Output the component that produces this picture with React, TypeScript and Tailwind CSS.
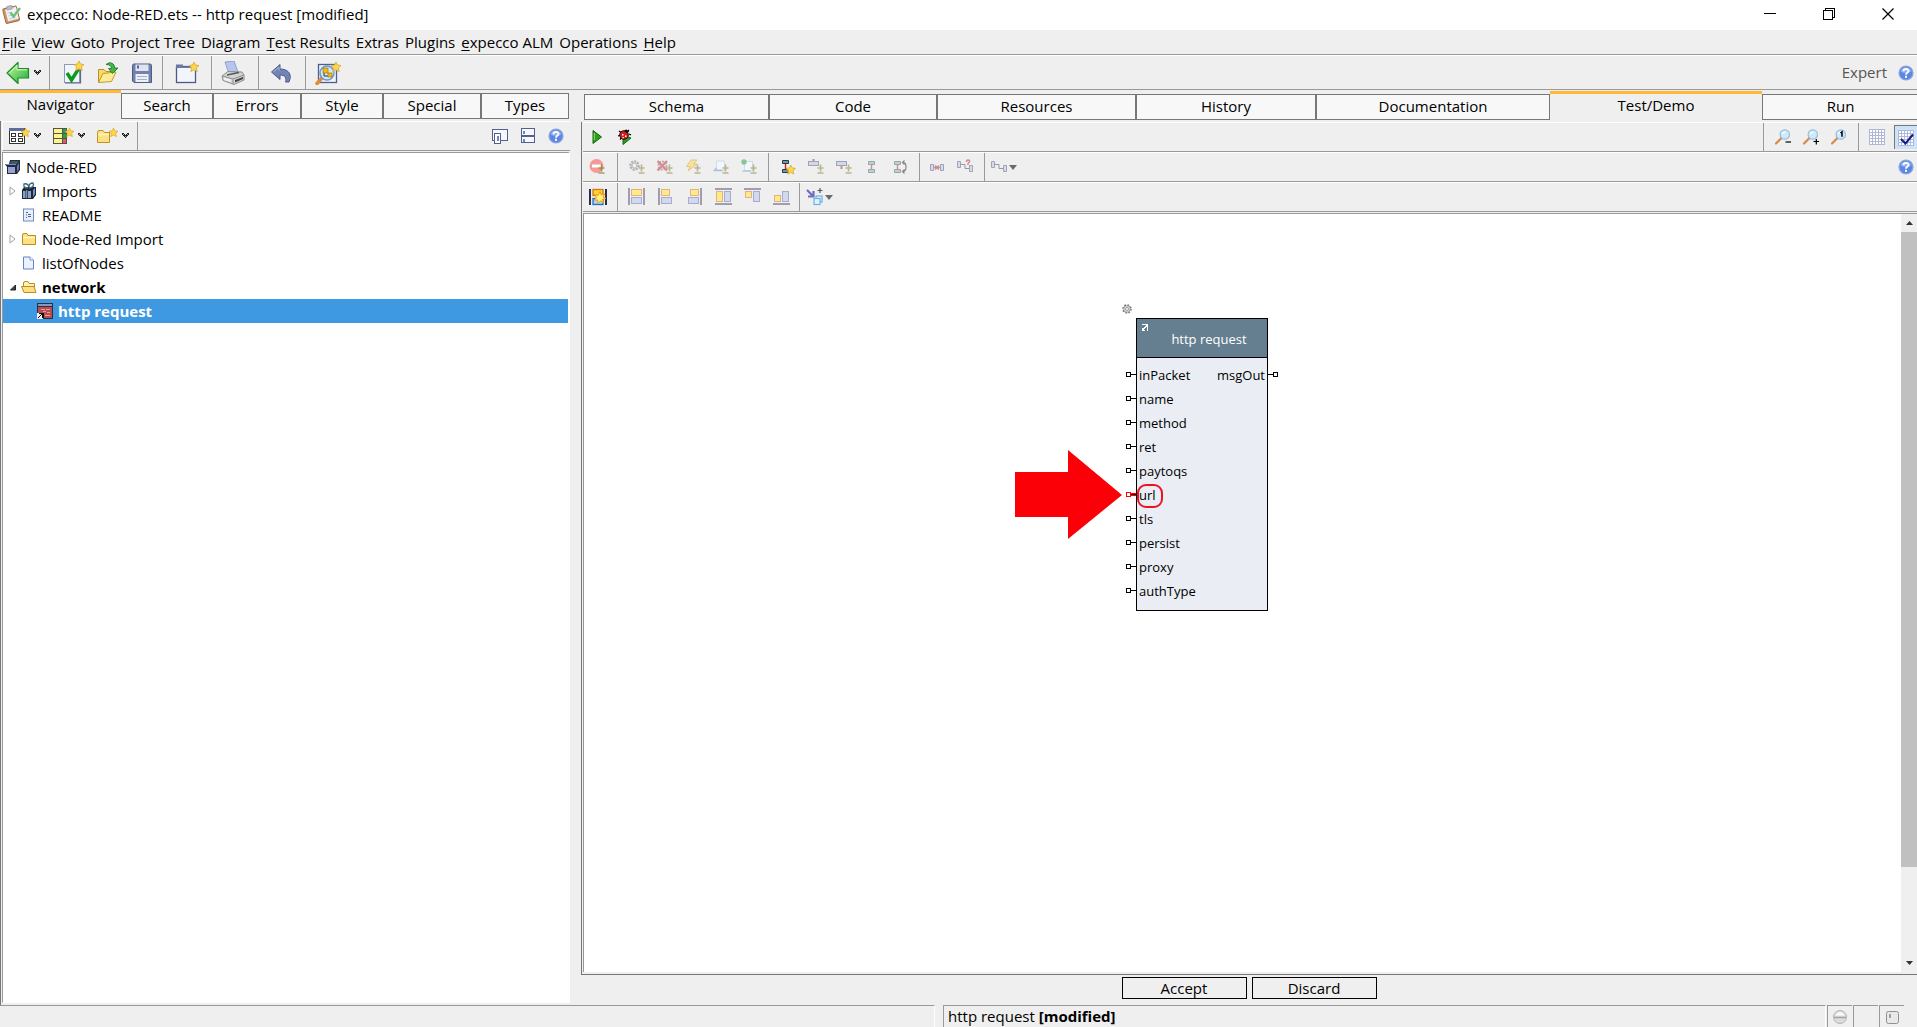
import type { ReactNode } from "react";
import clsx from "clsx";

const menus = [
  { key: "F", rest: "ile" },
  { key: "V", rest: "iew" },
  { key: "", rest: "Goto" },
  { key: "", rest: "Project Tree" },
  { key: "", rest: "Diagram" },
  { key: "T", rest: "est Results" },
  { key: "", rest: "Extras" },
  { key: "", rest: "Plugins" },
  { key: "e", rest: "xpecco ALM" },
  { key: "", rest: "Operations" },
  { key: "H", rest: "elp" },
];

const leftTabs = ["Navigator", "Search", "Errors", "Style", "Special", "Types"];
const rightTabs = ["Schema", "Code", "Resources", "History", "Documentation", "Test/Demo", "Run"];
const inputPins = ["inPacket", "name", "method", "ret", "paytoqs", "url", "tls", "persist", "proxy", "authType"];

/* ---------- icons ---------- */

function Ico({ w = 16, h = 16, crisp = false, faded = false, children }: { w?: number; h?: number; crisp?: boolean; faded?: boolean; children: ReactNode }) {
  return (
    <svg
      width={w}
      height={h}
      viewBox={`0 0 ${w} ${h}`}
      fill="none"
      shapeRendering={crisp ? "crispEdges" : "auto"}
      className={clsx("shrink-0", faded && "opacity-50")}
      aria-hidden="true"
    >
      {children}
    </svg>
  );
}

const Star = ({ x, y, s = 1 }: { x: number; y: number; s?: number }) => (
  <path
    transform={`translate(${x} ${y}) scale(${s})`}
    d="M5 0 L6.4 3 L10 3.6 L7.4 6 L8.2 9.6 L5 7.9 L1.8 9.6 L2.6 6 L0 3.6 L3.6 3 Z"
    fill="#fcd64c"
    stroke="#d9a021"
    strokeWidth="0.7"
  />
);

const Chevron = () => (
  <Ico w={7} h={6} crisp>
    <path d="M0 0h2v1h1v1h1v-1h1v-1h2v2h-1v1h-1v1h-1v1h-1v-1h-1v-1h-1v-1h-1z" fill="#222" />
    <path d="M1 1h1v1h-1zM5 1h1v1h-1zM3 3h1v1h-1z" fill="#aaa" />
  </Ico>
);

const DropTriangle = () => (
  <Ico w={8} h={5}>
    <path d="M0 0H8L4 5Z" fill="#6a6a6a" />
  </Ico>
);

const AppIcon = () => (
  <Ico w={20} h={20}>
    <g transform="rotate(-14 10 10)">
      <rect x="2" y="3" width="14" height="15" rx="1.5" fill="#d39a68" stroke="#9c6b46" />
      <rect x="4.500" y="4" width="11" height="12" fill="#eef2f8" />
      <rect x="6" y="1.500" width="6" height="3.500" rx="1" fill="#b9bcc6" stroke="#888" strokeWidth="0.600" />
      <path d="M6 8h3M6 11h5M6 14h7" stroke="#c2cbdb" />
    </g>
    <path d="M8.500 8.500L11.500 12.500L18 4" stroke="#74bd78" strokeWidth="2.400" />
  </Ico>
);

const BackIcon = () => (
  <Ico w={24} h={24}>
    <defs>
      <linearGradient id="back" x1="0" y1="0" x2="1" y2="1">
        <stop offset="0" stopColor="#c9f7a0" />
        <stop offset="1" stopColor="#1fae35" />
      </linearGradient>
    </defs>
    <path d="M1 12L12 1.500V7.500H22.500V17H12V22.500Z" fill="url(#back)" stroke="#1a8c2a" strokeWidth="1.200" strokeLinejoin="round" />
    <path d="M3.500 12L11 4.500V8.800H21" stroke="#e6fbd2" strokeWidth="0.900" />
  </Ico>
);

const NewTestIcon = () => (
  <Ico w={24} h={24}>
    <rect x="2.500" y="3.500" width="15" height="18" fill="#f3f5fb" stroke="#8d9abb" />
    <path d="M18.500 4v18H3" stroke="#5c6a8c" strokeWidth="1.200" />
    <path d="M5 12l4.500 7L16.500 8" stroke="#0a9b1d" strokeWidth="3.400" />
    <Star x={12} y={0} />
  </Ico>
);

const OpenIcon = () => (
  <Ico w={24} h={24}>
    <path d="M2.500 21V8.500H8L10 10.500H16V14" fill="#f7d968" stroke="#b98e24" />
    <path d="M2.500 21.500L7 12.500L20 11L15.500 20.500Z" fill="#fdeb95" stroke="#c49a2b" />
    <path d="M10 3.500C14 0 19 2.500 18.500 7H22L16.500 12.500L12.500 7.500H15.500C15.500 5 13.500 3.500 10 3.500Z" fill="#46b64c" stroke="#1f7d2a" strokeWidth="0.900" />
  </Ico>
);

const SaveIcon = () => (
  <Ico w={24} h={24}>
    <path d="M2.500 4.500Q2.500 3 4 3H20Q21.500 3 21.500 4.500V21.500H4L2.500 20Z" fill="#7381ac" stroke="#4d5b88" />
    <rect x="5.500" y="3.500" width="13" height="6.500" fill="#dfe4f2" />
    <rect x="7" y="4.500" width="2" height="3" fill="#59678f" />
    <rect x="5.500" y="13" width="13" height="8" fill="#eef0f7" />
    <path d="M7 15.500h10M7 18.500h10" stroke="#a6afc9" />
  </Ico>
);

const NewWindowIcon = () => (
  <Ico w={24} h={24}>
    <rect x="1.500" y="5.500" width="19" height="16" fill="#f3f5fc" stroke="#4c5a86" strokeWidth="1.300" />
    <path d="M1 3.500h7v2h13v1.500H1z" fill="#6b79a6" />
    <Star x={14} y={1} />
  </Ico>
);

const PrinterIcon = () => (
  <Ico w={24} h={24}>
    <path d="M4 1L13 0L17 11L8 13Z" fill="#b4c6ee" stroke="#8295c4" strokeWidth="0.800" />
    <path d="M1 15L7 10.500L21 11L23 14V19L13 23.500L2 19.500Z" fill="#d4d4d4" stroke="#8d8d8d" />
    <path d="M1.500 15L12 18L23 14" stroke="#8a8a8a" />
    <path d="M6 14L18 11.500" stroke="#555" strokeWidth="1.500" />
    <path d="M12 18.500V23" stroke="#8a8a8a" />
    <path d="M14 19L22 16V18L14 21.500Z" fill="#444" />
    <path d="M3 16.500l7 2v2.500l-7-2z" fill="#f0f0f0" />
  </Ico>
);

const UndoIcon = () => (
  <Ico w={24} h={24}>
    <path d="M1.500 11L10 3.500V8C17 8 23 12 19 21H15.500C17 17 15 14 10 14V18.500Z" fill="#7284b5" stroke="#4b5b8b" strokeLinejoin="round" />
    <path d="M3.500 11L9 6V9.300" stroke="#aeb9d8" />
  </Ico>
);

const SearchDiagramIcon = () => (
  <Ico w={26} h={24}>
    <rect x="3.500" y="3.500" width="18" height="18" fill="#eef2fb" stroke="#4c5f94" strokeWidth="1.300" />
    <path d="M2 22.500L7 17" stroke="#e08b36" strokeWidth="3.500" strokeLinecap="round" />
    <circle cx="12" cy="12" r="7" fill="#cfe6fb" stroke="#6f94c6" strokeWidth="1.400" />
    <path d="M9 10v5h5" stroke="#334" />
    <rect x="8" y="7" width="5" height="5" fill="#f2b90f" stroke="#93700c" strokeWidth="0.600" />
    <rect x="13" y="12" width="4" height="4" fill="#f2b90f" stroke="#93700c" strokeWidth="0.600" />
    <Star x={16} y={1} />
  </Ico>
);

const HelpIcon = () => (
  <Ico>
    <circle cx="8" cy="8" r="7" fill="#5b86e5" stroke="#8ca6e0" strokeWidth="1.200" />
    <path d="M2.500 6.500a5.800 5.800 0 0 1 11 0q-5.500 3-11 0z" fill="#8fb0f3" />
    <path d="M5.500 6.300C5.500 3.300 10.500 3.300 10.500 6C10.500 7.800 8 7.700 8 9.700" stroke="#fff" strokeWidth="1.900" />
    <rect x="7" y="10.800" width="2" height="2" fill="#fff" />
  </Ico>
);

const GridNewIcon = () => (
  <Ico w={24} h={18} crisp>
    <rect x="1.500" y="1.500" width="15" height="15" fill="#fff" stroke="#333" />
    <rect x="1" y="1" width="15" height="3" fill="#5c6f9c" />
    <path d="M3.500 6.500h4v3h-4zM10.500 6.500h4v3h-4zM3.500 11.500h4v3h-4zM10.500 11.500h4v3h-4z" stroke="#333" />
    <g shapeRendering="auto"><Star x={13} y={1} s={0.900} /></g>
  </Ico>
);

const TestPlanNewIcon = () => (
  <Ico w={24} h={18} crisp>
    <rect x="1" y="1" width="14" height="16" fill="#55534c" />
    <path d="M2 2h8v4H2zM2 7h8v4H2zM2 12h8v4H2z" fill="#fbf68c" />
    <path d="M11 2h3v4h-3zM11 7h3v4h-3z" fill="#23a64b" />
    <path d="M11 12h3v4h-3z" fill="#f0525c" />
    <g shapeRendering="auto"><Star x={13} y={1} s={0.900} /></g>
  </Ico>
);

const FolderNewIcon = () => (
  <Ico w={24} h={18}>
    <path d="M1.500 15.500V5.500Q1.500 3.500 3 3.500H7L8.500 5.500H13.500V15.500Z" fill="#fbe184" stroke="#c29222" />
    <path d="M2 7.500H13" stroke="#fff3c0" strokeWidth="1.500" />
    <Star x={13} y={1} s={0.900} />
  </Ico>
);

const DetachIcon = () => (
  <Ico crisp>
    <rect x="0.500" y="1.500" width="15" height="11" fill="#f7f8fd" stroke="#56608f" />
    <rect x="2.500" y="5.500" width="6" height="10" fill="#fff" stroke="#56608f" />
    <path d="M5 8h2v5H5z" fill="#6e87c0" />
  </Ico>
);

const SplitIcon = () => (
  <Ico crisp>
    <rect x="1.500" y="0.500" width="13" height="14" fill="#f7f8fd" stroke="#56608f" />
    <path d="M1 7.500h14M1 8.500h14" stroke="#56608f" />
    <path d="M4 3v3M4 11v3" stroke="#5b92c8" strokeWidth="2" />
  </Ico>
);

const ProjectIcon = () => (
  <Ico>
    <path d="M5 1h10v10l-3 4H2V8L0 5h4z" fill="#222b3a" />
    <path d="M6 2h8l-2 3H5z" fill="#40576a" />
    <path d="M3 8h7v6H3z" fill="#97a3d2" />
    <path d="M12 7l2-3v6l-2 3z" fill="#6b78ad" />
    <path d="M1 5.500h10" stroke="#7e8bc0" />
  </Ico>
);

const ImportsIcon = () => (
  <Ico w={16} h={18}>
    <path d="M3 5h12v8l-3 4H1V8z" fill="#1e2733" />
    <path d="M2 9h2.500v7H2zM7 9h3v7H7z" fill="#8f9fce" />
    <path d="M12 8l2-2v6l-2 3z" fill="#7e90c4" />
    <path d="M5.700 8v8" stroke="#6caac4" strokeWidth="1.200" />
    <path d="M7 6Q2 6 3 2Q7 1 8 5Q8 1 12 1Q14 5 8 6" stroke="#3d6f84" strokeWidth="1.400" />
  </Ico>
);

const ReadmeIcon = () => (
  <Ico>
    <rect x="2.500" y="2" width="10" height="12" fill="#e6effb" stroke="#6f8cc2" />
    <path d="M5 5.500h2M5 8h1M5 10.500h1M7 7.500h3M7 9.500h3" stroke="#4d6494" />
  </Ico>
);

const FileIcon = () => (
  <Ico>
    <path d="M2.500 2H9L12.500 5V14H2.500Z" fill="#eaf2fd" stroke="#6483c0" />
    <path d="M9 2V5H12.500" fill="#fff" stroke="#6483c0" strokeWidth="0.800" />
  </Ico>
);

const FolderIcon = () => (
  <Ico>
    <path d="M1.500 13.500V4Q1.500 2.500 3 2.500H6L7 4.500H14.500V13.500Z" fill="#fbe184" stroke="#bd8d20" />
    <path d="M2 6.500H14" stroke="#fff4c4" strokeWidth="1.500" />
  </Ico>
);

const FolderOpenIcon = () => (
  <Ico>
    <path d="M2.500 13V4Q2.500 2.500 4 2.500H7L8 4.500H13.500V8" fill="#fff3b8" stroke="#bd8d20" />
    <path d="M0.500 7.500H13L15 13.500H3Z" fill="#fbe184" stroke="#bd8d20" />
  </Ico>
);

const ActionIcon = () => (
  <Ico crisp>
    <rect x="0.500" y="0.500" width="15" height="15" fill="#b84c4f" stroke="#27313f" />
    <rect x="1" y="1" width="14" height="2" fill="#8897bd" />
    <path d="M1 3.500h14" stroke="#27313f" />
    <path d="M4 6.500h4M9 6.500h4M6 8.500h3M10 9.500h3M8 12.500h5" stroke="#f09a94" />
    <rect x="0" y="10" width="6" height="6" fill="#eee" />
    <path d="M1 15L5 11M2 10.500h4v4" stroke="#111" strokeWidth="1.300" />
  </Ico>
);

const PlayIcon = () => (
  <Ico>
    <path d="M4 1.500V14.500L12.500 8Z" fill="#2e9e1c" stroke="#14640c" />
    <path d="M5.300 4V11" stroke="#8ae070" />
  </Ico>
);

const BugIcon = () => (
  <Ico>
    <path d="M6 6V15.500L14 9Z" fill="#2e9e1c" stroke="#14640c" />
    <path d="M2 2l3 2M12 1l-2 2M1 7l3-1M3 10.500l2-2M12 5l2 1" stroke="#000" strokeWidth="1.300" />
    <circle cx="7" cy="6" r="4.300" fill="#e01818" stroke="#111" />
    <path d="M7.500 2.500Q7.500 0.500 9.500 0.500L12 2.500L10.500 4.500Z" fill="#111" />
    <path d="M5 5h1.500v1.500h-1.500zM8 6.500h1.500v1.500h-1.500zM5.500 8h1.300v1.300h-1.300z" fill="#fff" />
  </Ico>
);

const ZoomGlass = ({ kind }: { kind: "out" | "in" | "one" }) => (
  <Ico>
    <path d="M1 14.500L6.500 9" stroke="#d98845" strokeWidth="2.200" strokeLinecap="round" />
    <circle cx="9.800" cy="5.500" r="4.700" fill="#c8ecfa" stroke="#a0b9da" strokeWidth="1.200" />
    <path d="M7.500 5Q8.500 2.800 10.500 2.800" stroke="#fff" strokeWidth="1.300" />
    {kind === "out" && <path d="M10.500 13h5.500" stroke="#000" strokeWidth="1.200" />}
    {kind === "in" && <path d="M10.500 12.500h5.500M13.300 10v5.500" stroke="#000" strokeWidth="1.200" />}
    {kind === "one" && <path d="M9.500 4l1.500-1.200v5" stroke="#000" strokeWidth="1.500" />}
  </Ico>
);

const GridIcon = ({ checked = false }: { checked?: boolean }) => (
  <Ico crisp>
    <rect x="0.500" y="0.500" width="15" height="15" fill="#fff" stroke="#b0b8da" />
    <path d="M3.500 0v16M6.500 0v16M9.500 0v16M12.500 0v16M0 3.500h16M0 6.500h16M0 9.500h16M0 12.500h16" stroke="#b0b8da" />
    {checked && <path d="M3 9l4.500 4.500L15 4.500" stroke="#101c80" strokeWidth="2" shapeRendering="auto" />}
  </Ico>
);

/* small plus-minus mark in the corner of the pin tools */
const PlusMinus = () => (
  <path d="M12.500 5.500v7M9.500 9h6M9.500 14h6" stroke="#8a7c30" strokeWidth="1.600" />
);

const BreakpointIcon = () => (
  <Ico>
    <circle cx="7.500" cy="7" r="7" fill="#f49a98" />
    <rect x="3" y="5.500" width="9" height="3" fill="#fff" />
    <g opacity="0.700"><PlusMinus /></g>
  </Ico>
);
const GearPinIcon = () => (
  <Ico faded>
    <circle cx="5.500" cy="6.500" r="4" stroke="#777" strokeWidth="2.500" strokeDasharray="2 1" />
    <circle cx="5.500" cy="6.500" r="2.500" stroke="#888" />
    <PlusMinus />
  </Ico>
);
const GearRemoveIcon = () => (
  <Ico faded>
    <circle cx="5.500" cy="6.500" r="4" stroke="#777" strokeWidth="2" strokeDasharray="2 1" />
    <path d="M0.500 2L10 11.500M10 2L0.500 11.500" stroke="#c22a35" strokeWidth="2.400" />
    <PlusMinus />
  </Ico>
);
const BoltIcon = () => (
  <Ico faded>
    <path d="M6 1H12L8.500 5H12L3 12L5 7.500H1.500Z" fill="#ffd84a" stroke="#d69d23" />
    <PlusMinus />
  </Ico>
);
const WindowPinIcon = () => (
  <Ico faded>
    <path d="M3.500 2h8v9h-8z" fill="#fafdff" stroke="#a5cdf0" />
    <path d="M0.500 11.500h9M3.500 9l-2 2.500" stroke="#5f94cf" strokeWidth="1.300" />
    <PlusMinus />
  </Ico>
);
const GreenPinIcon = () => (
  <Ico faded>
    <path d="M3.500 2.500h8v9h-8z" fill="#fafdff" stroke="#a5cdf0" />
    <path d="M1.500 12h8" stroke="#5f94cf" strokeWidth="1.300" />
    <circle cx="3" cy="3" r="2.700" fill="#22a14d" />
    <PlusMinus />
  </Ico>
);
const LinkNewIcon = () => (
  <Ico>
    <path d="M2.500 1.500h6v3h-6zM2.500 10.500h6v3h-6z" fill="#6e9a9d" stroke="#1f3d45" />
    <path d="M5.500 5v5" stroke="#e01b1b" strokeWidth="1.400" />
    <Star x={6} y={6} s={0.950} />
  </Ico>
);
const PinAboveIcon = () => (
  <Ico faded>
    <rect x="0.500" y="2.500" width="10" height="4" fill="#b9c2e0" stroke="#4f5a86" />
    <path d="M5.500 2V0" stroke="#b01c2c" strokeWidth="2" />
    <PlusMinus />
  </Ico>
);
const PinBelowIcon = () => (
  <Ico faded>
    <rect x="0.500" y="2.500" width="10" height="4" fill="#b9c2e0" stroke="#4f5a86" />
    <path d="M5.500 7V10" stroke="#b01c2c" strokeWidth="2" />
    <PlusMinus />
  </Ico>
);
const LinkIcon = () => (
  <Ico faded>
    <path d="M4.500 2.500h6v3h-6zM4.500 10.500h6v3h-6z" fill="#8fb5b5" stroke="#3b646b" />
    <path d="M7.500 6v4" stroke="#e01b1b" strokeWidth="1.400" />
  </Ico>
);
const LinkSwapIcon = () => (
  <Ico faded>
    <path d="M2.500 2.500h6v3h-6zM2.500 10.500h6v3h-6z" fill="#8fb5b5" stroke="#3b646b" />
    <path d="M5.500 6v4" stroke="#e01b1b" strokeWidth="1.400" />
    <path d="M11 3.500Q14 3.500 14 8Q14 12.500 11 12.500M12.500 1.500L10.500 3.500L12.500 5.500M12.500 10.500L10.500 12.500L12.500 14.500" stroke="#222" strokeWidth="1.200" />
  </Ico>
);
const LineCutIcon = () => (
  <Ico faded>
    <path d="M1.500 5.500h3v6h-3zM11.500 5.500h3v6h-3z" fill="#c3cae6" stroke="#4f5a86" />
    <path d="M5 8.500h6" stroke="#555" />
    <path d="M6 6.500l4 4M10 6.500l-4 4" stroke="#c01c2c" strokeWidth="1.600" />
  </Ico>
);
const LineAskIcon = () => (
  <Ico faded>
    <path d="M0.500 2.500h3v6h-3zM12.500 6.500h3v6h-3z" fill="#c3cae6" stroke="#4f5a86" />
    <path d="M4 5.500h4v4h4" stroke="#444" />
    <path d="M9.500 3Q9.500 1 11 1Q13 1 12.500 3L11 4.500V6" stroke="#c01c2c" strokeWidth="1.400" />
  </Ico>
);
const LineStyleIcon = () => (
  <Ico faded>
    <path d="M0.500 2.500h3v6h-3zM12.500 6.500h3v6h-3z" fill="#c3cae6" stroke="#4f5a86" />
    <path d="M4 5.500h4v4h4" stroke="#444" />
  </Ico>
);

const AutoLayoutIcon = () => (
  <Ico w={18} h={18}>
    <path d="M1 1v16M17 1v16" stroke="#2a2c4c" strokeWidth="2" />
    <rect x="4" y="1.500" width="10" height="6" fill="#ffd23c" stroke="#c97b10" strokeWidth="1.300" />
    <rect x="4" y="10.500" width="10" height="6" fill="#a8d6fa" stroke="#1f6fc4" strokeWidth="1.300" />
    <path d="M11 3.500l1.300 3.500L16 6l-2 3l3 1.500l-3.400 0.800l0.900 3.700l-2.800-2.200L9 15.500l-0.300-3.600L5 12l2.700-2.400L5.500 6.500L9 7.300z" fill="#fff07a" stroke="#f29a10" />
  </Ico>
);

type Box = [number, number, number, number];
const AlignIcon = ({ bars, yellow, blue }: { bars: Box[]; yellow: Box; blue: Box }) => (
  <Ico w={18} h={18} crisp>
    {bars.map(([x, y, w, h]) => (
      <rect key={`${x}-${y}`} x={x} y={y} width={w} height={h} fill="#a09db2" />
    ))}
    <rect x={yellow[0] + 0.5} y={yellow[1] + 0.5} width={yellow[2] - 1} height={yellow[3] - 1} fill="#ffea86" stroke="#e3b187" />
    <rect x={blue[0] + 0.5} y={blue[1] + 0.5} width={blue[2] - 1} height={blue[3] - 1} fill="#d3d9ea" stroke="#a3add0" />
  </Ico>
);

const alignTools: { label: string; bars: Box[]; yellow: Box; blue: Box }[] = [
  { label: "Align both sides", bars: [[0, 0, 2, 17], [15, 0, 2, 17]], yellow: [3, 1, 11, 7], blue: [3, 9, 11, 7] },
  { label: "Align left", bars: [[1, 0, 2, 17]], yellow: [4, 1, 9, 7], blue: [4, 9, 11, 7] },
  { label: "Align right", bars: [[14, 0, 2, 17]], yellow: [4, 1, 9, 7], blue: [2, 9, 11, 7] },
  { label: "Align top and bottom", bars: [[0, 0, 17, 2], [0, 15, 17, 2]], yellow: [1, 3, 7, 11], blue: [9, 3, 7, 11] },
  { label: "Align top", bars: [[0, 0, 17, 2]], yellow: [1, 3, 7, 7], blue: [9, 3, 7, 11] },
  { label: "Align bottom", bars: [[0, 15, 17, 2]], yellow: [1, 7, 7, 7], blue: [9, 3, 7, 11] },
];

const InsertIcon = () => (
  <Ico w={18} h={18}>
    <path d="M1 2L7 8M7.500 3v5.500h-5.500" stroke="#6c6cc0" strokeWidth="2.200" />
    <path d="M14 0v5M11.500 2.500h5" stroke="#555" strokeWidth="1.200" />
    <rect x="10" y="8" width="6" height="6" fill="#e2f2fd" stroke="#6cb0e4" strokeWidth="1.200" />
    <rect x="8" y="10.500" width="6" height="6" fill="#e2f2fd" stroke="#6cb0e4" strokeWidth="1.200" />
  </Ico>
);

const GearIcon = () => (
  <Ico w={10} h={10}>
    <circle cx="5" cy="5" r="4" fill="#ddd" stroke="#777" strokeWidth="1.600" strokeDasharray="1.600 1.540" />
    <circle cx="5" cy="5" r="3.300" fill="#e2e2e2" stroke="#888" strokeWidth="0.700" />
    <circle cx="5" cy="5" r="1.500" fill="#fff" stroke="#888" strokeWidth="0.800" />
  </Ico>
);

/* ---------- building blocks ---------- */

function ToolButton({ label, className, children }: { label: string; className?: string; children: ReactNode }) {
  return (
    <button type="button" aria-label={label} className={clsx("flex h-6 shrink-0 items-center justify-center", className ?? "w-7")}>
      {children}
    </button>
  );
}

function Group({ className, children }: { className?: string; children: ReactNode }) {
  return <div className={clsx("flex h-full items-center border-r border-[#9a9a9a]", className)}>{children}</div>;
}

function Tabs({ tabs, active, label, className }: { tabs: string[]; active: string; label: string; className: string }) {
  return (
    <div role="tablist" aria-label={label} className={clsx("grid", className)}>
      {tabs.map((tab) => {
        const on = tab === active;
        return (
          <button
            key={tab}
            type="button"
            role="tab"
            aria-selected={on}
            className={clsx(
              "flex items-center justify-center leading-5",
              on
                ? "border-t-[3px] border-[#ffb734] bg-[#efefef] pb-[6px]"
                : "mt-[3px] mb-[2px] border border-[#777777] bg-[#f8f8f8] pb-[2px]"
            )}
          >
            {tab}
          </button>
        );
      })}
    </div>
  );
}

function TreeRow({ icon, text, level = 0, arrow, bold, selected }: { icon: ReactNode; text: string; level?: number; arrow?: "open" | "closed"; bold?: boolean; selected?: boolean }) {
  return (
    <li
      role="treeitem"
      aria-selected={!!selected}
      className={clsx(
        "flex h-6 items-center gap-[5px]",
        level === 0 && "pl-[2px]",
        level === 1 && "pl-1",
        level === 2 && "pl-[34px]",
        bold && "font-bold",
        selected && "bg-[#3f99e2] text-white"
      )}
    >
      {level === 1 && (
        <span className="flex w-[9px] justify-end">
          {arrow === "closed" && (
            <Ico w={7} h={10}>
              <path d="M1 1L6 5L1 9Z" fill="#fff" stroke="#a0a0a0" />
            </Ico>
          )}
          {arrow === "open" && (
            <Ico w={7} h={7}>
              <path d="M6.500 1V6H1.500Z" fill="#444" stroke="#222" />
            </Ico>
          )}
        </span>
      )}
      {icon}
      <span>{text}</span>
    </li>
  );
}

function Pin({ hot, right }: { hot?: boolean; right?: boolean }) {
  return (
    <Ico w={10} h={5} crisp>
      {right ? (
        <path d="M0 2.500H5M5.500 0.500h4v4h-4z" stroke="#000" />
      ) : hot ? (
        <>
          <path d="M4 1.500h6M4 3.500h6" stroke="#f00" />
          <path d="M5 2.500h5" stroke="#000" />
          <path d="M0.500 0.500h4v4h-4z" stroke="#f00" />
        </>
      ) : (
        <path d="M5 2.500h5M0.500 0.500h4v4h-4z" stroke="#000" />
      )}
    </Ico>
  );
}

/* ---------- panels ---------- */

function TitleBar() {
  return (
    <header className="flex h-[30px] shrink-0 items-center bg-white pb-[2px] pl-[2px]">
      <AppIcon />
      <h1 className="pl-[5px]">expecco: Node-RED.ets -- http request [modified]</h1>
      <div className="ml-auto flex">
        <button type="button" aria-label="Minimize" className="flex h-7 w-[59px] items-center justify-center">
          <Ico w={12} h={12} crisp><path d="M0 5.500h12" stroke="#000" /></Ico>
        </button>
        <button type="button" aria-label="Restore" className="flex h-7 w-[59px] items-center justify-center">
          <Ico w={12} h={12} crisp><path d="M0.500 2.500h9v9h-9zM2.500 2.500v-2h9v9h-2" stroke="#000" /></Ico>
        </button>
        <button type="button" aria-label="Close" className="flex h-7 w-[59px] items-center justify-center">
          <Ico w={12} h={12}><path d="M0.500 0.500l11 11M11.500 0.500l-11 11" stroke="#000" strokeWidth="1.200" /></Ico>
        </button>
      </div>
    </header>
  );
}

function MenuBar() {
  return (
    <nav className="flex h-[25px] shrink-0 items-center gap-[6px] border-b border-[#999999] pl-[2px]">
      {menus.map((m) => (
        <button key={m.key + m.rest} type="button" className="leading-5 whitespace-nowrap">
          {m.key && <span className="underline underline-offset-2">{m.key}</span>}
          {m.rest}
        </button>
      ))}
    </nav>
  );
}

function MainToolbar() {
  return (
    <div className="flex h-[35px] shrink-0 items-center border-t border-b border-t-white border-b-[#999999]">
      <Group className="gap-1 pr-2 pl-[6px]">
        <ToolButton label="Back" className="w-6"><BackIcon /></ToolButton>
        <ToolButton label="Back history" className="w-[7px]"><Chevron /></ToolButton>
      </Group>
      <Group className="gap-[10px] pr-2 pl-3">
        <ToolButton label="New test suite" className="w-6"><NewTestIcon /></ToolButton>
        <ToolButton label="Open" className="w-6"><OpenIcon /></ToolButton>
        <ToolButton label="Save" className="w-6"><SaveIcon /></ToolButton>
      </Group>
      <Group className="px-3">
        <ToolButton label="New window" className="w-6"><NewWindowIcon /></ToolButton>
      </Group>
      <Group className="pr-[13px] pl-[9px]">
        <ToolButton label="Print" className="w-6"><PrinterIcon /></ToolButton>
      </Group>
      <Group className="pr-[11px] pl-[11px]">
        <ToolButton label="Undo" className="w-6"><UndoIcon /></ToolButton>
      </Group>
      <ToolButton label="Search elements" className="ml-2 w-7"><SearchDiagramIcon /></ToolButton>
      <span className="ml-auto text-[#555555]">Expert</span>
      <ToolButton label="Help" className="mr-[3px] ml-[11px] w-4"><HelpIcon /></ToolButton>
    </div>
  );
}

function Navigator() {
  return (
    <aside className="flex w-[570px] shrink-0 flex-col">
      <Tabs tabs={leftTabs} active="Navigator" label="Navigator views" className="h-[31px] w-[569px] grid-cols-[121fr_92fr_88fr_82fr_98fr_88fr]" />
      <div className="flex min-h-0 flex-1 flex-col border-l border-[#777777] pl-px">
        <div className="flex h-[30px] shrink-0 items-center border-t border-b border-l border-t-white border-b-[#999999] border-l-white">
          <Group className="gap-[11px] pr-2 pl-[5px]">
            {[
              { label: "New action", icon: <GridNewIcon /> },
              { label: "New test plan", icon: <TestPlanNewIcon /> },
              { label: "New folder", icon: <FolderNewIcon /> },
            ].map((t) => (
              <div key={t.label} className="flex gap-[2px]">
                <ToolButton label={t.label} className="w-6">{t.icon}</ToolButton>
                <ToolButton label={`${t.label} options`} className="w-[7px]"><Chevron /></ToolButton>
              </div>
            ))}
          </Group>
          <div className="ml-auto flex">
            <ToolButton label="Detach"><DetachIcon /></ToolButton>
            <ToolButton label="Split"><SplitIcon /></ToolButton>
            <ToolButton label="Help"><HelpIcon /></ToolButton>
          </div>
        </div>
        <ul role="tree" aria-label="Project tree" className="mt-px mb-[2px] flex-1 border-t border-r-2 border-b border-l border-t-[#999999] border-r-white border-b-white border-l-[#999999] bg-white pt-[2px]">
          <TreeRow icon={<ProjectIcon />} text="Node-RED" />
          <TreeRow level={1} arrow="closed" icon={<ImportsIcon />} text="Imports" />
          <TreeRow level={1} icon={<ReadmeIcon />} text="README" />
          <TreeRow level={1} arrow="closed" icon={<FolderIcon />} text="Node-Red Import" />
          <TreeRow level={1} icon={<FileIcon />} text="listOfNodes" />
          <TreeRow level={1} arrow="open" icon={<FolderOpenIcon />} text="network" bold />
          <TreeRow level={2} icon={<ActionIcon />} text="http request" bold selected />
        </ul>
      </div>
    </aside>
  );
}

function EditorToolbars() {
  return (
    <>
      <div className="flex h-[30px] shrink-0 items-center border-t border-b border-t-white border-b-[#999999]">
        <ToolButton label="Run test"><PlayIcon /></ToolButton>
        <ToolButton label="Debug"><BugIcon /></ToolButton>
        <div className="ml-auto flex h-full items-center">
          <div className="flex h-full items-center border-r border-l border-[#9a9a9a] px-[5px]">
            <ToolButton label="Zoom out"><ZoomGlass kind="out" /></ToolButton>
            <ToolButton label="Zoom in"><ZoomGlass kind="in" /></ToolButton>
            <ToolButton label="Original size"><ZoomGlass kind="one" /></ToolButton>
          </div>
          <ToolButton label="Show grid" className="ml-1 w-7"><GridIcon /></ToolButton>
          <button type="button" aria-label="Align to grid" aria-pressed="true" className="ml-[3px] flex h-6 w-[23px] items-center border-t border-l border-[#777777] bg-[#cde3f9] pl-[3px]">
            <GridIcon checked />
          </button>
        </div>
      </div>
      <div className="flex h-[30px] shrink-0 items-center border-t border-b border-t-white border-b-[#999999]">
        <Group className="pr-[6px]">
          <ToolButton label="Breakpoint"><BreakpointIcon /></ToolButton>
        </Group>
        <Group className="px-[5px]">
          <ToolButton label="Environment"><GearPinIcon /></ToolButton>
          <ToolButton label="Remove environment"><GearRemoveIcon /></ToolButton>
          <ToolButton label="Trigger pin"><BoltIcon /></ToolButton>
          <ToolButton label="Window pin"><WindowPinIcon /></ToolButton>
          <ToolButton label="Enable pin"><GreenPinIcon /></ToolButton>
        </Group>
        <Group className="px-[5px]">
          <ToolButton label="New link"><LinkNewIcon /></ToolButton>
          <ToolButton label="Input pin"><PinAboveIcon /></ToolButton>
          <ToolButton label="Output pin"><PinBelowIcon /></ToolButton>
          <ToolButton label="Link"><LinkIcon /></ToolButton>
          <ToolButton label="Swap link"><LinkSwapIcon /></ToolButton>
        </Group>
        <Group className="pr-[5px] pl-[3px]">
          <ToolButton label="Cut line"><LineCutIcon /></ToolButton>
          <ToolButton label="Check line"><LineAskIcon /></ToolButton>
        </Group>
        <ToolButton label="Line style" className="ml-[6px] gap-[2px]"><LineStyleIcon /><DropTriangle /></ToolButton>
        <ToolButton label="Help" className="mr-[3px] ml-auto w-4"><HelpIcon /></ToolButton>
      </div>
      <div className="flex h-[30px] shrink-0 items-center border-t border-b border-t-white border-b-[#999999]">
        <Group className="pr-[5px] pl-px">
          <ToolButton label="Auto layout"><AutoLayoutIcon /></ToolButton>
        </Group>
        <Group className="pr-[3px] pl-1">
          {alignTools.map((t) => (
            <ToolButton key={t.label} label={t.label} className="w-[29px]">
              <AlignIcon bars={t.bars} yellow={t.yellow} blue={t.blue} />
            </ToolButton>
          ))}
        </Group>
        <ToolButton label="Insert" className="ml-[6px] gap-px"><InsertIcon /><DropTriangle /></ToolButton>
      </div>
    </>
  );
}

function HttpRequestNode() {
  return (
    <div className="absolute top-[104px] left-[552px] w-[132px] text-[13px]">
      <span className="absolute -top-[14px] -left-[14px]"><GearIcon /></span>
      <section className="h-[293px] border border-black bg-[#eaeef4]">
        <h2 className="relative flex h-[39px] items-center justify-center border-b border-black bg-[#657f90] pt-1 pl-[14px] text-white">
          <span className="absolute top-[5px] left-[5px]">
            <Ico w={6} h={7} crisp>
              <path d="M0 0.500h6M5.500 0v7M0 6.500h3M0.500 4v3M2 3.500h2M1 5.500l4-4" stroke="#fff" />
            </Ico>
          </span>
          http request
        </h2>
        <ul className="pt-[6px]">
          {inputPins.map((pin) => (
            <li key={pin} className="relative flex h-6 items-center justify-between px-[2px]">
              <span className="absolute top-2 -left-[11px]"><Pin hot={pin === "url"} /></span>
              <span>{pin}</span>
              {pin === "url" && <span className="absolute top-0 left-0 h-6 w-[26px] rounded-[9px] border-2 border-[#ee1122]" />}
              {pin === "inPacket" && (
                <>
                  <span>msgOut</span>
                  <span className="absolute top-2 -right-[11px]"><Pin right /></span>
                </>
              )}
            </li>
          ))}
        </ul>
      </section>
      <span className="absolute top-[132px] -left-[121px]">
        <Ico w={107} h={90}>
          <path d="M0 22H53V0L107 45L53 89V67H0Z" fill="#fb0007" />
        </Ico>
      </span>
    </div>
  );
}

function Editor() {
  return (
    <main className="ml-[11px] flex min-w-0 flex-1 flex-col pt-px">
      <Tabs tabs={rightTabs} active="Test/Demo" label="Editor views" className="-mr-[2px] ml-[3px] h-[31px] grid-cols-[185fr_168fr_199fr_180fr_234fr_212fr_157fr]" />
      <div className="flex min-h-0 flex-1 flex-col border-b border-l border-[#777777] pl-px">
        <EditorToolbars />
        <div className="mt-px mb-[2px] flex min-h-0 flex-1 border-t border-l border-[#999999]">
          <div className="relative min-w-0 flex-1 overflow-hidden bg-white">
            <HttpRequestNode />
          </div>
          <div className="flex w-4 flex-col items-center">
            <button type="button" aria-label="Scroll up" className="flex h-[18px] w-full items-center justify-center">
              <Ico w={7} h={4}><path d="M0 4L3.500 0L7 4Z" fill="#333" /></Ico>
            </button>
            <div className="w-full flex-1">
              <div className="h-[88%] w-full bg-[#c0c0c0]" />
            </div>
            <button type="button" aria-label="Scroll down" className="flex h-[18px] w-full items-center justify-center">
              <Ico w={7} h={4}><path d="M0 0L3.500 4L7 0Z" fill="#333" /></Ico>
            </button>
          </div>
        </div>
      </div>
      <div className="flex h-[30px] shrink-0 justify-center gap-[5px] pt-[2px]">
        <button type="button" className="h-[22px] w-[125px] border border-black leading-5">Accept</button>
        <button type="button" className="h-[22px] w-[125px] border border-black leading-5">Discard</button>
      </div>
    </main>
  );
}

function StatusBar() {
  return (
    <footer className="flex h-[22px] shrink-0">
      <div className="w-[935px] border-t border-r border-t-[#999999] border-r-white" />
      <div className="ml-2 min-w-0 flex-1 border-t border-r border-l border-t-[#999999] border-r-white border-l-[#999999] pl-1 leading-5">
        http request <b>[modified]</b>
      </div>
      <div className="ml-px flex w-[25px] items-start justify-center border-t border-l border-[#999999] pt-1">
        <Ico w={14} h={14}>
          <circle cx="7" cy="7" r="6.500" fill="#dcdcdc" stroke="#b4b4b4" />
          <path d="M1 7.500h12" stroke="#a4a4a4" strokeWidth="1.500" />
          <path d="M2 5.500Q7-1.500 12 5.500Z" fill="#fafafa" />
        </Ico>
      </div>
      <div className="ml-px w-[25px] border-t border-l border-[#999999]" />
      <div className="mr-[13px] ml-px flex w-[25px] items-start justify-center border-t border-l border-[#999999] pt-[5px]">
        <Ico w={13} h={13}>
          <rect x="0.500" y="0.500" width="12" height="12" rx="2" fill="#e8e8e8" stroke="#909090" />
          <path d="M4 3v4" stroke="#888" strokeWidth="1.500" />
        </Ico>
      </div>
    </footer>
  );
}

export default function App() {
  return (
    <div className="flex h-screen flex-col overflow-hidden bg-[#efefef] font-['Open_Sans',sans-serif] text-[15px] text-black">
      <TitleBar />
      <MenuBar />
      <MainToolbar />
      <div className="flex min-h-0 flex-1">
        <Navigator />
        <Editor />
      </div>
      <StatusBar />
    </div>
  );
}
